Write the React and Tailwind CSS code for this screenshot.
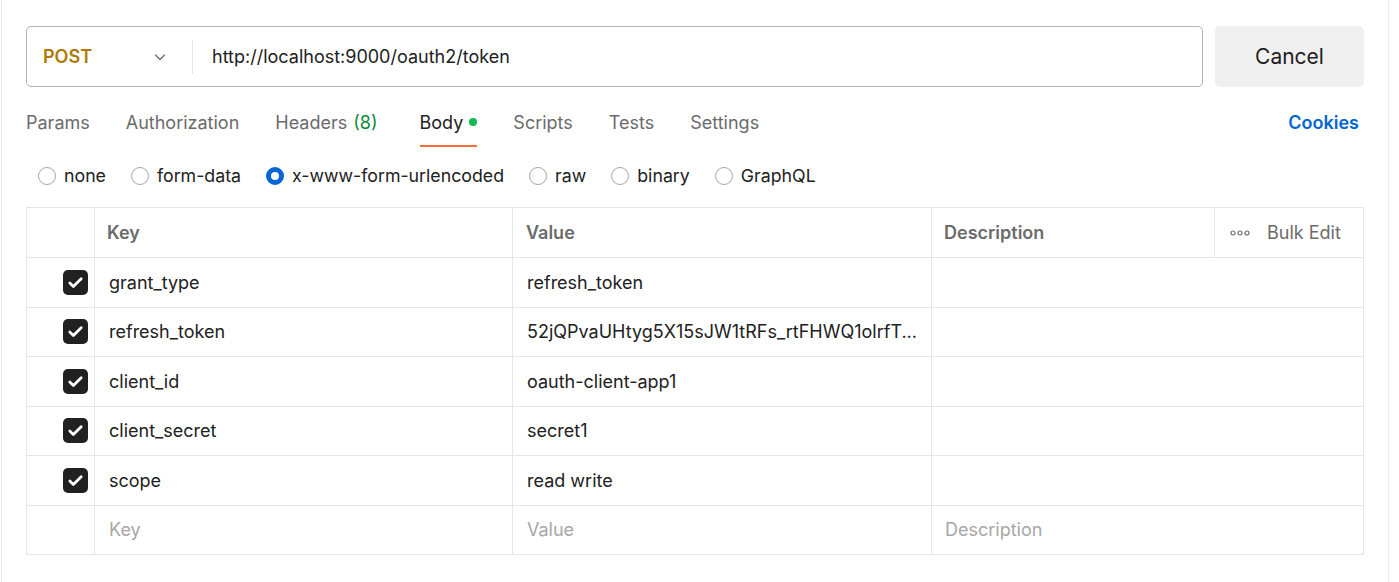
const tabs = [
  { label: 'Params' },
  { label: 'Authorization' },
  { label: 'Headers', count: '(8)' },
  { label: 'Body', active: true, dot: true },
  { label: 'Scripts' },
  { label: 'Tests' },
  { label: 'Settings' },
];

const bodyTypes = ['none', 'form-data', 'x-www-form-urlencoded', 'raw', 'binary', 'GraphQL'];

const rows = [
  { key: 'grant_type', value: 'refresh_token' },
  { key: 'refresh_token', value: '52jQPvaUHtyg5X15sJW1tRFs_rtFHWQ1olrfT...' },
  { key: 'client_id', value: 'oauth-client-app1' },
  { key: 'client_secret', value: 'secret1' },
  { key: 'scope', value: 'read write' },
];

function Checkbox() {
  return (
    <div className="w-[25px] h-[25px] rounded-[5px] bg-[#212121] flex items-center justify-center">
      <svg width="19" height="19" viewBox="0 0 16 16" fill="none">
        <path d="M3.2 8.4l3 3L12.8 4.8" stroke="white" strokeWidth="2.3" strokeLinecap="round" strokeLinejoin="round" />
      </svg>
    </div>
  );
}

function Radio({ checked }) {
  return checked ? (
    <span className="w-[18px] h-[18px] rounded-full border-[5px] border-[#0265d2] bg-white shrink-0" />
  ) : (
    <span className="w-[18px] h-[18px] rounded-full border border-[#a6a6a6] bg-white shrink-0" />
  );
}

export default function App() {
  return (
    <div className="w-[1399px] h-[582px] bg-white text-[18px] text-[#212121]" style={{ fontFamily: 'Inter, "Noto Sans", sans-serif' }}>
      <div className="ml-[1px] w-[1388px] h-[582px] border-x border-[#ebebeb] pl-[24px] pr-[24px] pt-[26px]">
        {/* URL bar */}
        <div className="flex gap-[12px] h-[61px]">
          <div className="flex-1 flex items-center border border-[#b3b3b3] rounded-[5px]">
            <div className="w-[165px] flex items-center justify-between pl-[16px] pr-[24px]">
              <span className="font-semibold text-[#ad7a03]">POST</span>
              <svg width="16" height="16" viewBox="0 0 16 16" fill="none">
                <path d="M3.5 6l4.5 4.5L12.5 6" stroke="#6b6b6b" strokeWidth="1.3" strokeLinecap="round" strokeLinejoin="round" />
              </svg>
            </div>
            <div className="w-px h-[34px] bg-[#e6e6e6]" />
            <span className="pl-[19px] text-[#212121]">http://localhost:9000/oauth2/token</span>
          </div>
          <button className="w-[149px] rounded-[5px] bg-[#f0f0f0] text-[21px] text-[#212121] flex items-center justify-center">
            Cancel
          </button>
        </div>

        {/* Tabs */}
        <div className="mt-[12px] flex items-center justify-between">
          <div className="flex gap-[36px]">
            {tabs.map((t) => (
              <div
                key={t.label}
                className={`h-[48px] flex items-center gap-[6px] border-b-2 ${
                  t.active ? 'border-[#ff6c37] text-[#212121]' : 'border-transparent text-[#6b6b6b]'
                } ${t.count ? 'pr-[6px]' : ''}`}
              >
                <span>{t.label}</span>
                {t.count && <span className="text-[#0a8a3a]">{t.count}</span>}
                {t.dot && <span className="w-[8px] h-[8px] rounded-full bg-[#0cbb52]" />}
              </div>
            ))}
          </div>
          <span className="font-semibold text-[#0265d2] pr-[5px] pb-[2px]">Cookies</span>
        </div>

        {/* Body types */}
        <div className="mt-[11px] h-[36px] flex items-center gap-[25px] pl-[12px]">
          {bodyTypes.map((b) => (
            <label key={b} className="flex items-center gap-[8px]">
              <Radio checked={b === 'x-www-form-urlencoded'} />
              <span className="text-[17.75px] text-[#212121]">{b}</span>
            </label>
          ))}
        </div>

        {/* Table */}
        <div className="mt-[13px] border border-[#e6e6e6]">
          <div className="flex h-[49px] font-semibold text-[#6b6b6b]">
            <div className="w-[68px] border-r border-[#e6e6e6]" />
            <div className="w-[418px] border-r border-[#e6e6e6] flex items-center pl-[12px]">Key</div>
            <div className="w-[419px] border-r border-[#e6e6e6] flex items-center pl-[13px]">Value</div>
            <div className="w-[283px] border-r border-[#e6e6e6] flex items-center pl-[12px]">Description</div>
            <div className="flex-1 flex items-center pl-[15px] gap-[17px] font-normal">
              <svg width="20" height="6" viewBox="0 0 20 6" fill="none">
                <circle cx="3" cy="3" r="2" stroke="#6b6b6b" strokeWidth="1.2" />
                <circle cx="10" cy="3" r="2" stroke="#6b6b6b" strokeWidth="1.2" />
                <circle cx="17" cy="3" r="2" stroke="#6b6b6b" strokeWidth="1.2" />
              </svg>
              <span>Bulk Edit</span>
            </div>
          </div>
          {rows.map((r) => (
            <div key={r.key} className="flex h-[49.5px] border-t border-[#e6e6e6]">
              <div className="w-[68px] border-r border-[#e6e6e6] flex items-center justify-end pr-[6px]">
                <Checkbox />
              </div>
              <div className="w-[418px] border-r border-[#e6e6e6] flex items-center pl-[14px]">{r.key}</div>
              <div className="w-[419px] border-r border-[#e6e6e6] flex items-center pl-[14px]">{r.value}</div>
              <div className="flex-1" />
            </div>
          ))}
          <div className="flex h-[49px] border-t border-[#e6e6e6] text-[#a6a6a6]">
            <div className="w-[68px] border-r border-[#e6e6e6]" />
            <div className="w-[418px] border-r border-[#e6e6e6] flex items-center pl-[14px]">Key</div>
            <div className="w-[419px] border-r border-[#e6e6e6] flex items-center pl-[14px]">Value</div>
            <div className="flex-1 flex items-center pl-[13px]">Description</div>
          </div>
        </div>
      </div>
    </div>
  );
}
